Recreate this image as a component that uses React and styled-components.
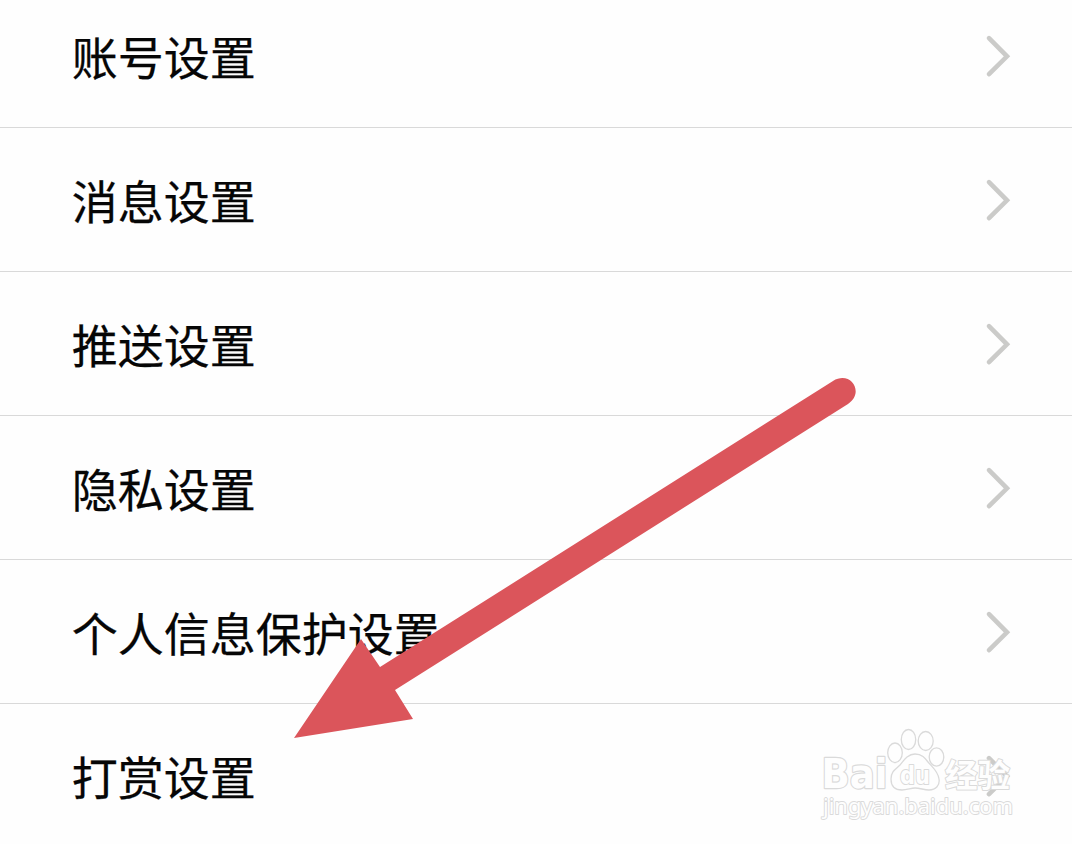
import React from "react";
import styled, { createGlobalStyle } from "styled-components";

const GlobalStyle = createGlobalStyle`
  body { margin: 0; background: #fefefe; overflow: hidden; }
`;
const Screen = styled.main`
  position: relative;
  width: 1072px;
  height: 844px;
  overflow: hidden;
  background: #fefefe;
  font-family: "Noto Sans CJK SC", sans-serif;
`;
const List = styled.div`
  display: flex;
  flex-direction: column;
  margin-top: -16px;
`;
const Row = styled.div`
  box-sizing: border-box;
  flex: none;
  height: 144px;
  padding: 0 61px 0 72px;
  display: flex;
  align-items: center;
  justify-content: space-between;
  border-bottom: 1px solid ${(p) => (p.$last ? "transparent" : "#d9d9d9")};
`;
const Label = styled.span`
  font-size: 46px;
  line-height: 60px;
  color: #060606;
  padding-bottom: 2px;
  margin-left: -0.3px;
  -webkit-text-stroke: 0.25px #060606;
`;
const Chevron = styled.svg`
  width: 26px;
  height: 44px;
`;
const Arrow = styled.svg`
  position: absolute;
  left: 280px;
  top: 360px;
  pointer-events: none;
`;
const Watermark = styled.svg`
  position: absolute;
  left: 810px;
  top: 720px;
  pointer-events: none;
`;
const Mark = styled.text`
  paint-order: stroke;
  fill: #fefefe;
  stroke: #dadada;
  stroke-width: ${(p) => p.$outline || 2}px;
`;

const items = ["账号设置", "消息设置", "推送设置", "隐私设置", "个人信息保护设置", "打赏设置"];

export default function App() {
  return (
    <Screen>
      <GlobalStyle />
      <List>
        {items.map((name, i) => (
          <Row key={name} $last={i === items.length - 1}>
            <Label>{name}</Label>
            <Chevron viewBox="0 0 26 44" fill="none" stroke="#cbcbc9" strokeWidth="4.6" strokeLinecap="round">
              <path d="M4 4.2L22 22.3L4 40.2" />
            </Chevron>
          </Row>
        ))}
      </List>
      <Arrow width="590" height="390" viewBox="280 360 590 390">
        <path d="M294 738L361 639L380 667L833 381C851 370 865 393 848 404L395 690L413 719Z" fill="#db555b" />
      </Arrow>
      <Watermark width="220" height="110" fill="#fefefe" stroke="#dadada" strokeWidth="1.3" strokeLinejoin="round">
        <Mark x="11.5" y="68" fontFamily="DejaVu Sans" fontWeight="700" fontSize="40" textLength="66" lengthAdjust="spacingAndGlyphs" $outline={2.4}>Bai</Mark>
        <ellipse cx="98.5" cy="19.5" rx="7.2" ry="10" />
        <ellipse cx="115.7" cy="21" rx="7.5" ry="9.5" />
        <ellipse cx="85" cy="32.8" rx="7.3" ry="9.8" />
        <ellipse cx="126.5" cy="37" rx="7.3" ry="9.2" />
        <path d="M105 34C98 34 94 40 90 45C86 49 81 51 81 59C81 66 85 70 92 70C97 70 101 68 105 68C110 68 114 70 119 70C126 70 130 65 129 59C128 51 122 47 118 42C115 38 112 34 105 34Z" />
        <Mark x="90" y="63.5" fontFamily="DejaVu Sans" fontWeight="700" fontSize="24" textLength="30" lengthAdjust="spacingAndGlyphs" $outline={2}>du</Mark>
        <Mark x="135" y="66.5" fontFamily="Noto Sans CJK SC" fontWeight="700" fontSize="32" textLength="65" lengthAdjust="spacingAndGlyphs" $outline={2}>经验</Mark>
        <Mark x="13" y="94" fontFamily="Noto Sans" fontSize="21" textLength="190" lengthAdjust="spacingAndGlyphs" $outline={1.8}>jingyan.baidu.com</Mark>
      </Watermark>
    </Screen>
  );
}
